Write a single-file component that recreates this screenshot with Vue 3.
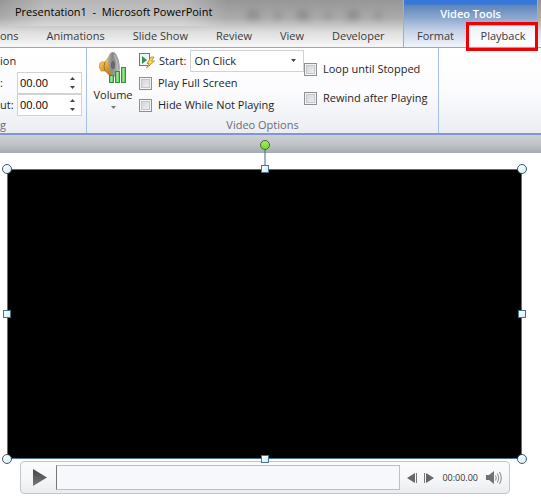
<script setup>
import { ref } from 'vue'

const mainTabs = ['ons', 'Animations', 'Slide Show', 'Review', 'View', 'Developer']
const startMode = ref('On Click')
const trims = ref([
  { id: 'fade-in', label: ':', value: '00.00' },
  { id: 'fade-out', label: 'ut:', value: '00.00' },
])
const playOptions = ref([
  { label: 'Play Full Screen', on: false },
  { label: 'Hide While Not Playing', on: false },
])
const loopOptions = ref([
  { label: 'Loop until Stopped', on: false },
  { label: 'Rewind after Playing', on: false },
])
const handles = ['nw', 'n', 'ne', 'w', 'e', 'sw', 's', 'se']
</script>

<template>
  <div class="window">
    <header class="top">
      <div class="main-part">
        <div class="title">Presentation1&nbsp; -&nbsp; Microsoft PowerPoint</div>
        <div class="shadows"><i></i><i></i><i></i><i></i><i></i><i></i></div>
        <nav class="tabs">
          <button v-for="t in mainTabs" :key="t" class="tab">{{ t }}</button>
        </nav>
      </div>
      <div class="context-part">
        <div class="context-title">Video Tools</div>
        <nav class="tabs">
          <button class="tab">Format</button>
          <button class="tab active">Playback</button>
        </nav>
      </div>
    </header>

    <section class="ribbon">
      <div class="group editing">
        <div class="fade-title">ion</div>
        <div v-for="t in trims" :key="t.id" class="fade-row">
          <label :for="t.id">{{ t.label }}</label>
          <div class="spin">
            <input :id="t.id" v-model="t.value" type="text">
            <div class="spin-buttons">
              <button aria-label="Increase"><svg viewBox="0 0 5 3"><path d="M0 3L2.5 0L5 3z" /></svg></button>
              <button aria-label="Decrease"><svg viewBox="0 0 5 3"><path d="M0 0L2.5 3L5 0z" /></svg></button>
            </div>
          </div>
        </div>
        <div class="group-label">g</div>
      </div>

      <div class="group options">
        <div class="option-body">
          <button class="volume">
            <svg class="speaker" viewBox="0 0 30 32">
              <defs>
                <linearGradient id="gold" x1="0" y1="0" x2="0.4" y2="1">
                  <stop offset="0" stop-color="#fff0b4" />
                  <stop offset="0.45" stop-color="#efbd4b" />
                  <stop offset="1" stop-color="#b87a22" />
                </linearGradient>
                <linearGradient id="cone" x1="0" y1="0" x2="1" y2="0.6">
                  <stop offset="0" stop-color="#c9c4b8" />
                  <stop offset="0.4" stop-color="#858688" />
                  <stop offset="1" stop-color="#b0b1b3" />
                </linearGradient>
                <linearGradient id="green" x1="0" y1="0" x2="1" y2="0">
                  <stop offset="0" stop-color="#5cb858" />
                  <stop offset="0.5" stop-color="#9be68c" />
                  <stop offset="1" stop-color="#55b554" />
                </linearGradient>
              </defs>
              <path d="M2 11Q4 9 7 10L12 3Q14 0 17 1L16 25Q14 26 11 23L7 19L3 19Q0 15 2 11z" fill="url(#gold)" stroke="#c2974a" stroke-width="0.7" />
              <path d="M7 10Q5 14 7 19" fill="none" stroke="#a9731e" />
              <ellipse cx="16" cy="12.500" rx="5" ry="12" transform="rotate(-8 16 12.500)" fill="url(#cone)" stroke="#9a9b9c" />
              <path d="M16 3Q20 9 19 19" fill="none" stroke="#c4c5c6" />
              <ellipse cx="15" cy="13" rx="2" ry="4" fill="#66676a" />
              <g fill="url(#green)" stroke="#2f9433">
                <rect x="11.500" y="23.500" width="4" height="7" />
                <rect x="17.500" y="19.500" width="4" height="11" />
                <rect x="23.500" y="15.500" width="4" height="15" />
              </g>
            </svg>
            <span>Volume</span>
            <svg class="down" viewBox="0 0 5 3"><path d="M0 0L2.5 3L5 0z" /></svg>
          </button>

          <div class="column play-column">
            <div class="start-row">
              <svg class="start-icon" viewBox="0 0 16 16">
                <rect x="0.5" y="0.5" width="10" height="12" fill="#eef5fa" stroke="#66798b" />
                <path d="M3 3L8 7L3 11z" fill="#3f8d4b" />
                <path d="M12 4L15 4L12.500 8L15.500 8L7.500 15L10 10.500L8 10.500z" fill="#ffd94a" stroke="#a17a20" stroke-width="0.7" />
              </svg>
              <label for="start">Start:</label>
              <div class="select">
                <select id="start" v-model="startMode">
                  <option>On Click</option>
                  <option>Automatically</option>
                </select>
                <svg class="down" viewBox="0 0 5 3"><path d="M0 0L2.5 3L5 0z" /></svg>
              </div>
            </div>
            <label v-for="o in playOptions" :key="o.label" class="check">
              <input v-model="o.on" type="checkbox"><span>{{ o.label }}</span>
            </label>
          </div>

          <div class="column loop-column">
            <label v-for="o in loopOptions" :key="o.label" class="check">
              <input v-model="o.on" type="checkbox"><span>{{ o.label }}</span>
            </label>
          </div>
        </div>
        <div class="group-label">Video Options</div>
      </div>
    </section>
    <div class="backdrop"></div>

    <main class="slide">
      <div class="video">
        <span class="stem"></span>
        <span class="rotate"></span>
        <span v-for="h in handles" :key="h" class="handle" :class="[h, { round: h.length === 2 }]"></span>
      </div>
      <div class="player">
        <button class="play" aria-label="Play">
          <svg viewBox="0 0 14 17">
            <defs>
              <linearGradient id="dark" x1="0" y1="0" x2="0" y2="1">
                <stop offset="0" stop-color="#444" /><stop offset="1" stop-color="#77797c" />
              </linearGradient>
            </defs>
            <path d="M0 0L14 8.500L0 17z" fill="url(#dark)" />
          </svg>
        </button>
        <div class="track"></div>
        <button class="step" aria-label="Step back">
          <svg viewBox="0 0 11 10"><path d="M8 0V10L0 5z" fill="#666" /><path d="M9.500 0V10" stroke="#777" /></svg>
        </button>
        <button class="step" aria-label="Step forward">
          <svg viewBox="0 0 11 10"><path d="M3 0V10L11 5z" fill="#666" /><path d="M1.500 0V10" stroke="#777" /></svg>
        </button>
        <time class="time">00:00.00</time>
        <button class="mute" aria-label="Mute">
          <svg viewBox="0 0 16 14">
            <path d="M0 4H3L8 0V13L3 9H0z" fill="#707274" />
            <path d="M9.500 4.500Q11 7 9.500 9.500M11.500 2.500Q14 7 11.500 11.500M13.500 1Q17 7 13.500 13" fill="none" stroke="#85878a" />
          </svg>
        </button>
      </div>
    </main>
  </div>
</template>

<style>
body {
  background: #fff;
}
</style>

<style scoped>
.window {
  font-family: "Open Sans", "Noto Sans", sans-serif;
  font-size: 11px;
  line-height: 16px;
  color: #1e1e1e;
  overflow: hidden;
}
button {
  font: inherit;
  color: inherit;
  background: none;
  border: 0;
  padding: 0;
}
svg {
  display: block;
}
.top {
  display: flex;
  height: 48px;
  padding-right: 3px;
  box-sizing: border-box;
  border-bottom: 1px solid #86a9dc;
  background: linear-gradient(#969696, #ababab 18px, #dedede 32px, #f7f7f7);
}
.main-part {
  flex: 1;
  min-width: 0;
  display: grid;
  grid-template-columns: auto 1fr;
  grid-template-rows: 26px 21px;
}
.title {
  padding: 4px 15px 0 15px;
  color: #000;
  white-space: nowrap;
  background: linear-gradient(90deg, rgba(255, 255, 255, 0), rgba(255, 255, 255, 0.3) 20%, rgba(255, 255, 255, 0.3) 80%, rgba(255, 255, 255, 0));
}
.shadows {
  display: flex;
  align-items: center;
  justify-content: flex-end;
  gap: 16px;
  padding: 4px 22px 0 0;
  filter: blur(3px);
}
.shadows i {
  width: 6px;
  height: 7px;
  background: #777;
  opacity: 0.5;
}
.shadows i:nth-child(odd) {
  width: 12px;
  height: 10px;
}
.tabs {
  grid-column: 1 / -1;
  display: flex;
  align-items: flex-start;
}
.tab {
  padding: 1px 14px;
  line-height: 18px;
  color: #3a3a3a;
  white-space: nowrap;
}
.main-part .tab:first-child {
  padding-left: 0;
}
.context-part {
  flex: 0 0 135px;
  box-sizing: border-box;
  display: grid;
  grid-template-rows: 26px 21px;
  border: solid #8fb0e2;
  border-width: 0 1px;
  background: linear-gradient(#3677dc 4px, #5c84bb 5px, #8ba8cf 18px, #c3d0e6 30px, #f2f5fb);
}
.context-title {
  padding-top: 6px;
  text-align: center;
  font-weight: 600;
  color: #fff;
}
.context-part .tab {
  flex: 0 0 63px;
  padding: 1px 0;
}
.context-part .tab.active {
  position: relative;
  flex: 1;
  padding-left: 2px;
  background: linear-gradient(#eef1f6, #fff);
}
.active::after {
  content: "";
  position: absolute;
  inset: -4px -1px -5px -1px;
  border: 3px solid #f20000;
}
.ribbon {
  display: flex;
  height: 85px;
  background: linear-gradient(#fff, #fcfcfe 50%, #ebedf2);
}
.group {
  display: flex;
  flex-direction: column;
  box-sizing: border-box;
  border-right: 1px solid #a9c1e8;
}
.editing {
  flex: 0 0 87px;
  padding: 4px 4px 0 0;
}
.fade-title {
  height: 20px;
  line-height: 18px;
}
.fade-row {
  display: flex;
  justify-content: space-between;
  align-items: center;
  height: 22px;
}
.spin {
  display: flex;
  width: 65px;
  height: 22px;
  box-sizing: border-box;
  border: 1px solid #cfd2d6;
  background: #fff;
}
.spin input {
  flex: 1;
  min-width: 0;
  padding: 0 0 0 2px;
  border: 0;
  background: none;
  font: inherit;
  color: #000;
}
.spin-buttons {
  display: flex;
  flex-direction: column;
  justify-content: center;
  gap: 6px;
  padding-right: 6px;
}
.spin-buttons svg,
.down {
  width: 5px;
  height: 3px;
  fill: #444;
}
.group-label {
  margin-top: auto;
  line-height: 16px;
  text-align: center;
  color: #6b6b74;
}
.editing .group-label {
  text-align: left;
}
.options {
  flex: 0 0 352px;
  padding-top: 2px;
}
.option-body {
  display: flex;
}
.volume {
  display: flex;
  flex-direction: column;
  align-items: center;
  width: 52px;
  padding-top: 2px;
}
.speaker {
  width: 30px;
  height: 32px;
  margin-bottom: 3px;
}
.volume .down {
  margin-top: 3px;
  fill: #777;
}
.column {
  display: flex;
  flex-direction: column;
}
.play-column {
  flex: 0 0 165px;
}
.start-row {
  display: flex;
  align-items: center;
  height: 22px;
  gap: 4px;
}
.start-icon {
  width: 16px;
  height: 16px;
}
.select {
  position: relative;
  flex: 1;
}
.select select {
  appearance: none;
  display: block;
  width: 100%;
  height: 22px;
  padding: 0 3px;
  border: 1px solid #cfd2d6;
  border-radius: 0;
  background: #fff;
  font: inherit;
  color: #222;
}
.select .down {
  position: absolute;
  right: 8px;
  top: 9px;
}
.check {
  display: flex;
  align-items: center;
  height: 22px;
  gap: 6px;
  white-space: nowrap;
}
.check input {
  appearance: none;
  flex: none;
  width: 13px;
  height: 13px;
  margin: 0;
  border: 1px solid #8e8f8f;
  background: linear-gradient(135deg, #ccd0d5, #f4f4f5);
  box-shadow: inset 0 0 0 1px #f4f4f4, inset 0 0 0 2px #c3c7cb;
}
.loop-column {
  padding-top: 8px;
  gap: 7px;
}
.backdrop {
  height: 20px;
  box-sizing: border-box;
  border-top: 2px solid #8297d2;
  background: linear-gradient(#cdd1d5, #c1c5c8 50%, #a5abb0);
}
.slide {
  padding: 16px 19px 4px 7px;
}
.video {
  position: relative;
  height: 290px;
  background: #000;
  box-shadow: inset 0 0 0 1px #4a7299;
}
.handle {
  position: absolute;
  width: 8px;
  height: 8px;
  box-sizing: border-box;
  border: 1px solid #47728f;
  background: linear-gradient(135deg, #fff, #d3eef2);
  transform: translate(-50%, -50%);
}
.handle.round {
  width: 10px;
  height: 10px;
  border-color: #405766;
  border-radius: 50%;
}
.nw, .w, .sw { left: 0; }
.n, .s { left: 50%; }
.ne, .e, .se { left: 100%; }
.nw, .n, .ne { top: 0; }
.w, .e { top: 50%; }
.sw, .s, .se { top: 100%; }
.stem {
  position: absolute;
  left: 50%;
  top: -20px;
  width: 1px;
  height: 20px;
  background: #3e6a96;
  transform: translateX(-50%);
}
.rotate {
  position: absolute;
  left: 50%;
  top: -24px;
  width: 10px;
  height: 10px;
  box-sizing: border-box;
  border: 1px solid #4b6a38;
  border-radius: 50%;
  background: linear-gradient(#a5f05a, #6fd928);
  transform: translate(-50%, -50%);
}
.player {
  display: flex;
  align-items: center;
  height: 33px;
  box-sizing: border-box;
  margin: 2px 12px 0 13px;
  padding: 0 7px 0 12px;
  border: 1px solid #c4c6ce;
  border-radius: 4px;
  background: linear-gradient(#fbfbfc, #f7f8fa 50%, #ebecef);
}
.play svg {
  width: 14px;
  height: 17px;
}
.track {
  flex: 1;
  height: 25px;
  box-sizing: border-box;
  margin: 0 7px 0 9px;
  border: 1px solid #bcc0c4;
  border-left-color: #777;
  background: #f6f8fb;
}
.step {
  margin-right: 5px;
}
.step svg {
  width: 11px;
  height: 10px;
}
.time {
  margin: 0 8px 0 3px;
  font-size: 9px;
  line-height: 14px;
  color: #333;
}
.mute svg {
  width: 16px;
  height: 14px;
}
</style>
